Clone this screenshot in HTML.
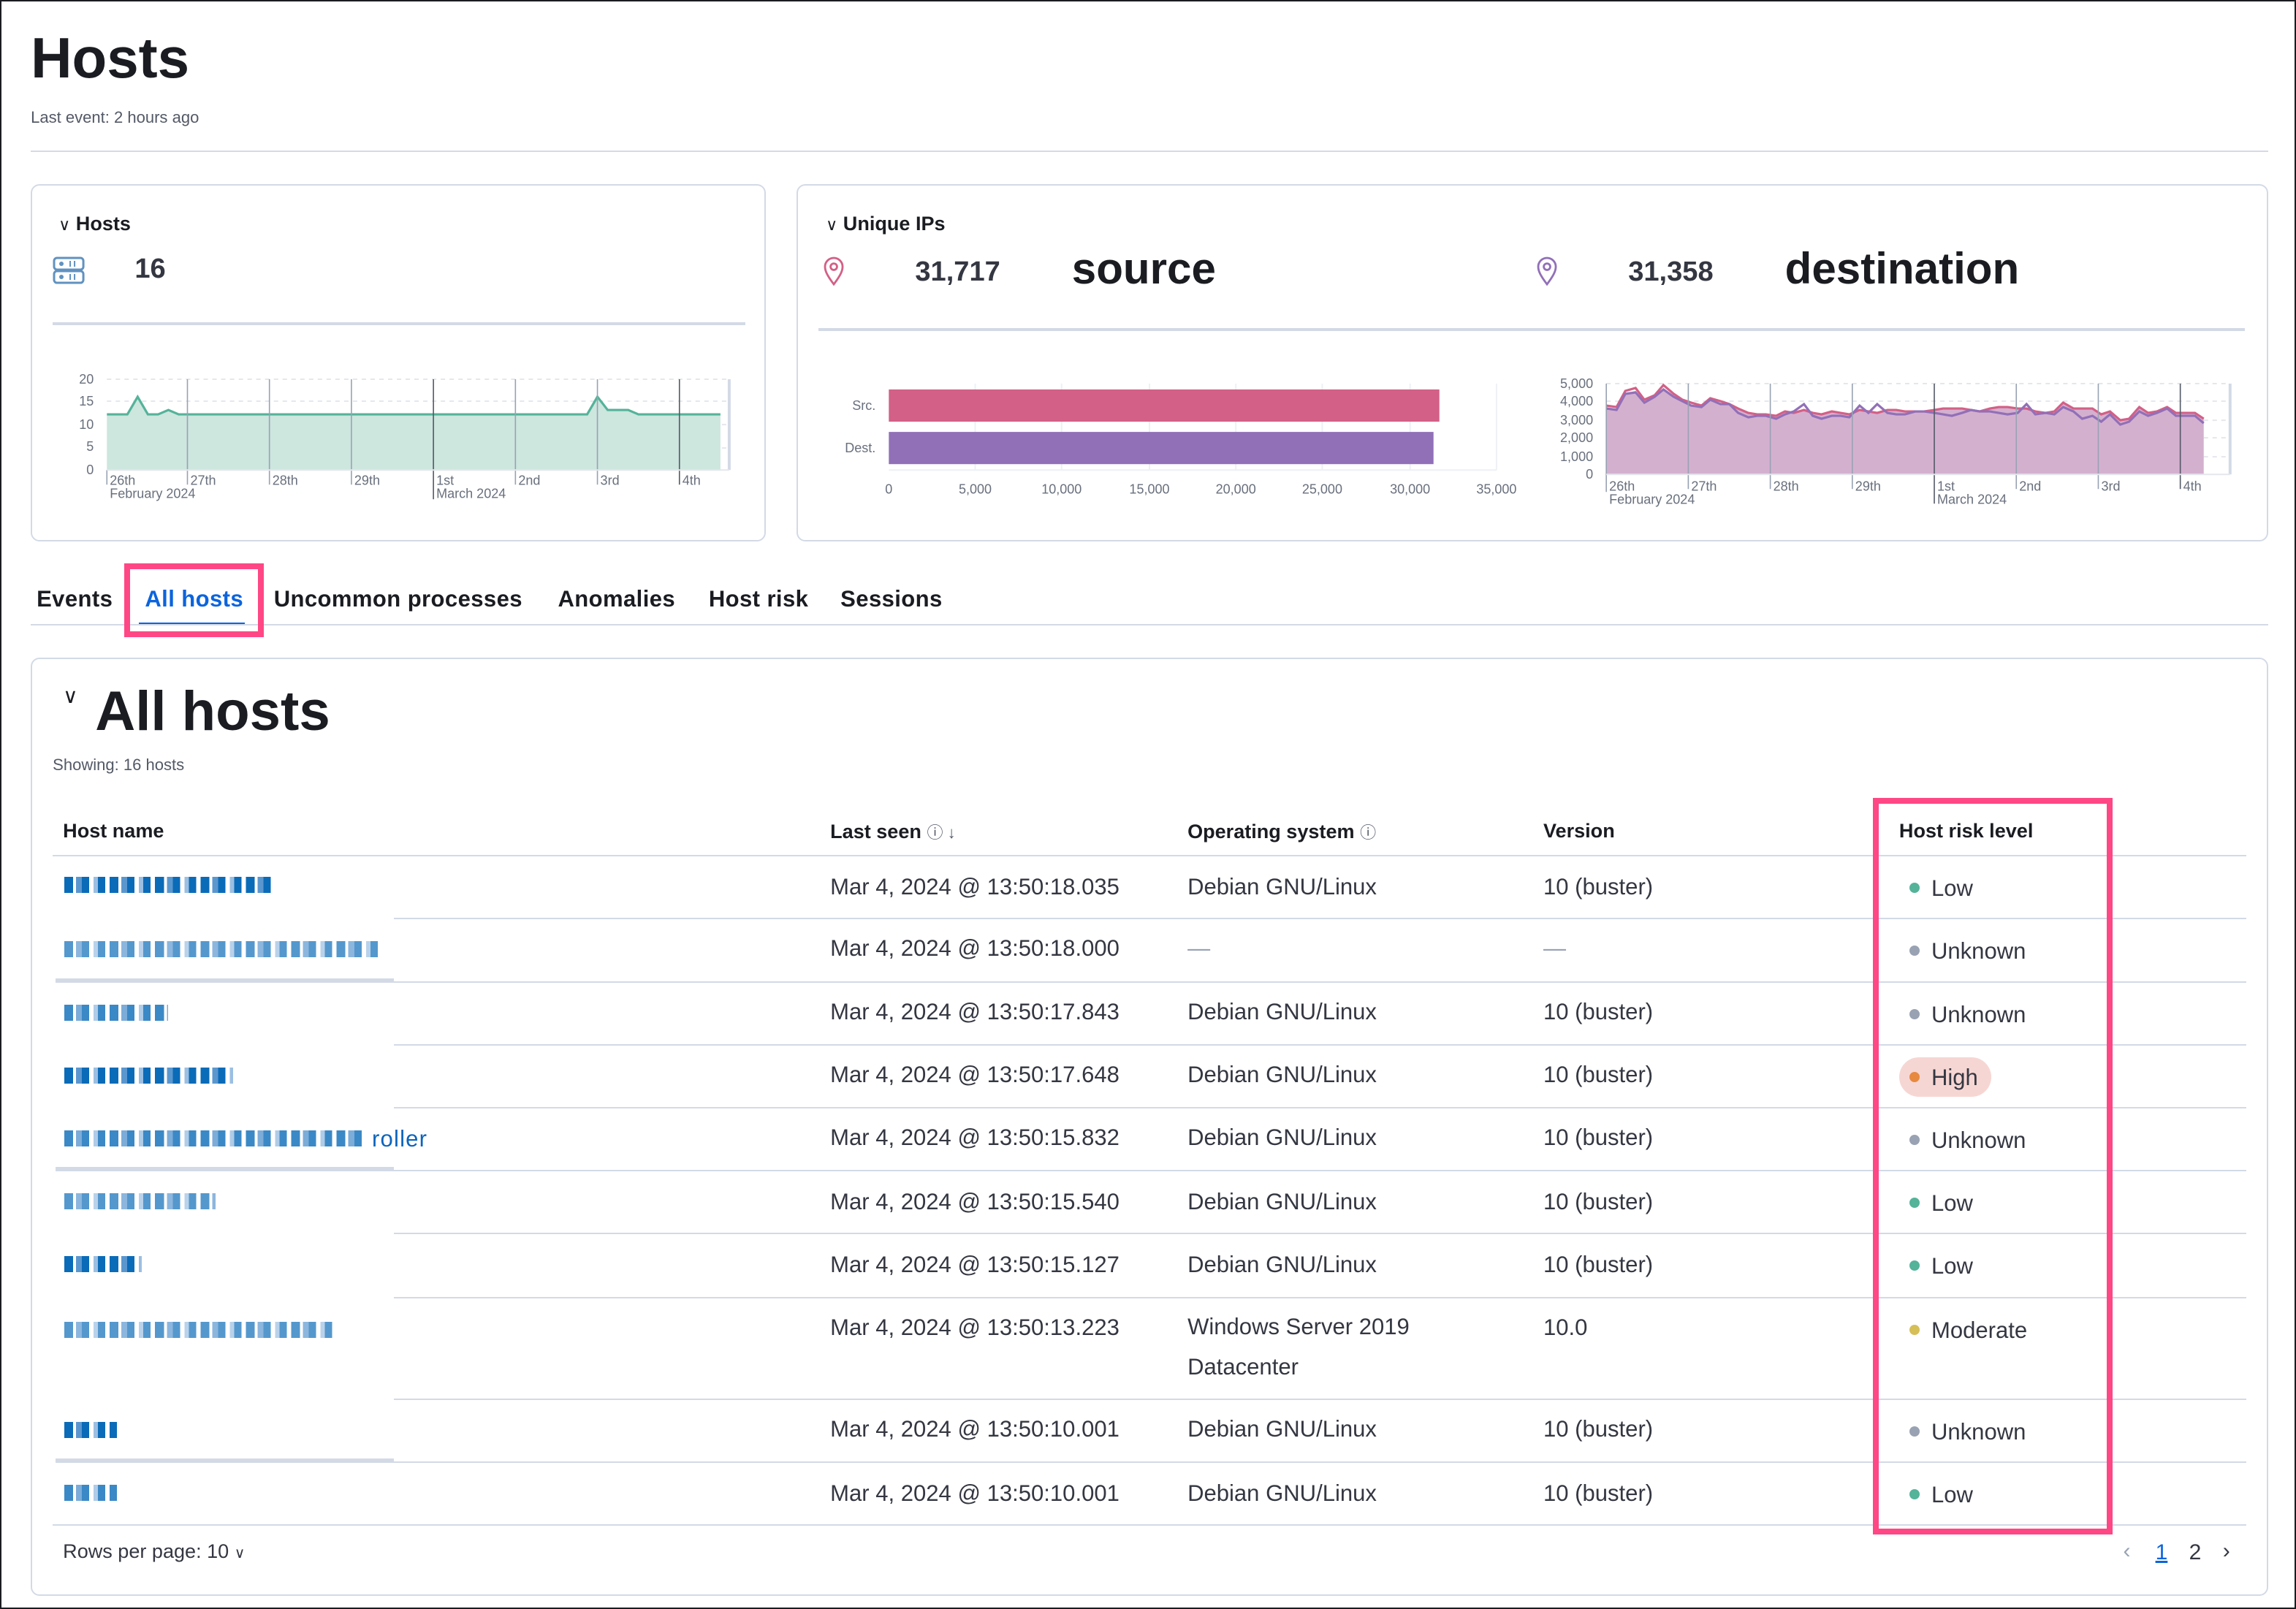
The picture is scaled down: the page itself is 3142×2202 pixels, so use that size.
<!DOCTYPE html>
<html><head><meta charset="utf-8">
<style>
html,body{margin:0;padding:0;background:#fff;}
body{width:3142px;height:2202px;overflow:hidden;}
#p{position:relative;width:1568px;height:1099px;zoom:2.0038;font-family:"Liberation Sans",sans-serif;color:#1a1c21;box-sizing:border-box;border:1px solid #1a1c21;overflow:hidden;}
.a{position:absolute;white-space:nowrap;}
.panel{position:absolute;border:1px solid #d3dae6;border-radius:6px;box-sizing:border-box;}
.hl{position:absolute;height:1px;background:#d3dae6;}
.b{font-weight:bold;}
.cell{position:absolute;font-size:15.5px;color:#343741;white-space:nowrap;}
.hd{position:absolute;font-size:13.5px;font-weight:bold;white-space:nowrap;}
.dot{display:inline-block;width:7px;height:7px;border-radius:50%;margin-right:8px;vertical-align:2px;}
.blk{position:absolute;height:11px;background:repeating-linear-gradient(90deg,#0a6bb8 0 6px,#fff 6px 8px,#5b97cf 8px 12px,#0a6bb8 12px 17px,#fff 17px 20px,#9bbfe2 20px 23px,#0a6bb8 23px 28px,#fff 28px 31px);}
.gbar{position:absolute;height:3px;background:#d3dae6;left:37px;width:231px;}
.tab{position:absolute;font-weight:bold;font-size:15.5px;letter-spacing:0.2px;white-space:nowrap;}
</style></head><body><div id="p">

<div class="a b" style="left:20px;top:16px;font-size:39px;">Hosts</div>
<div class="a" style="left:20px;top:73px;font-size:11px;color:#535966;">Last event: 2 hours ago</div>
<div class="hl" style="left:20px;top:102px;width:1528px;"></div>

<div class="panel" style="left:20px;top:125px;width:502px;height:244px;"></div>
<div class="panel" style="left:543px;top:125px;width:1005px;height:244px;"></div>

<div class="a b" style="left:39px;top:144px;font-size:13.5px;"><span style="font-weight:normal;font-size:11px;">&#8744;</span> Hosts</div>
<svg class="a" style="left:35px;top:174px" width="22" height="19" viewBox="0 0 22 19"><rect x="1" y="1" width="20" height="8" rx="2" fill="none" stroke="#6092c0" stroke-width="1.5"/><rect x="1" y="10" width="20" height="8" rx="2" fill="none" stroke="#6092c0" stroke-width="1.5"/><circle cx="6" cy="5" r="1.5" fill="#6092c0"/><circle cx="6" cy="14" r="1.5" fill="#6092c0"/><path d="M12 3v4M15 3v4M12 12v4M15 12v4" stroke="#6092c0"/></svg>
<div class="a b" style="left:91px;top:172px;font-size:19px;color:#343741;">16</div>
<div class="hl" style="left:35px;top:219px;width:473px;height:2px;"></div>

<div class="a b" style="left:563px;top:144px;font-size:13.5px;"><span style="font-weight:normal;font-size:11px;">&#8744;</span> Unique IPs</div>
<svg class="a" style="left:561px;top:174px" width="15" height="20" viewBox="0 0 15 20"><path d="M7.5 19C3 13 1.5 10 1.5 7a6 6 0 0 1 12 0c0 3-1.5 6-6 12z" fill="none" stroke="#d36086" stroke-width="1.4"/><circle cx="7.5" cy="7" r="2.2" fill="none" stroke="#d36086" stroke-width="1.4"/></svg>
<div class="a b" style="left:624px;top:174px;font-size:19px;color:#343741;">31,717</div>
<div class="a b" style="left:731px;top:165px;font-size:30px;">source</div>
<svg class="a" style="left:1048px;top:174px" width="15" height="20" viewBox="0 0 15 20"><path d="M7.5 19C3 13 1.5 10 1.5 7a6 6 0 0 1 12 0c0 3-1.5 6-6 12z" fill="none" stroke="#9170b8" stroke-width="1.4"/><circle cx="7.5" cy="7" r="2.2" fill="none" stroke="#9170b8" stroke-width="1.4"/></svg>
<div class="a b" style="left:1111px;top:174px;font-size:19px;color:#343741;">31,358</div>
<div class="a b" style="left:1218px;top:165px;font-size:30px;">destination</div>
<div class="hl" style="left:558px;top:223px;width:974px;height:2px;"></div>

<svg class="a" style="left:0;top:0" width="1568" height="1099" font-family="Liberation Sans, sans-serif" font-size="9" fill="#69707d">
 <g stroke="#e5e7ec" stroke-dasharray="3 3"><line x1="72" y1="258" x2="497" y2="258"/><line x1="72" y1="273" x2="497" y2="273"/><line x1="72" y1="289" x2="497" y2="289"/><line x1="72" y1="305" x2="497" y2="305"/></g>
 <polygon points="72,320 72,282 86,282 93,270 100,282 107,282 114,279 121,282 400,282 407,270 414,279 428,279 435,282 491,282 491,320" fill="#cde6de"/>
 <polyline points="72,282 86,282 93,270 100,282 107,282 114,279 121,282 400,282 407,270 414,279 428,279 435,282 491,282" fill="none" stroke="#54b399" stroke-width="1.6"/>
 <g stroke="#98a2b3" stroke-width="0.8"><line x1="127" y1="258" x2="127" y2="330"/><line x1="183" y1="258" x2="183" y2="330"/><line x1="239" y1="258" x2="239" y2="330"/><line x1="295" y1="258" x2="295" y2="340" stroke="#535966"/><line x1="351" y1="258" x2="351" y2="330"/><line x1="407" y1="258" x2="407" y2="330"/><line x1="463" y1="258" x2="463" y2="330" stroke="#535966"/><line x1="72" y1="320" x2="72" y2="330"/></g>
 <line x1="497" y1="258" x2="497" y2="320" stroke="#d3dae6" stroke-width="2"/>
 <line x1="72" y1="320" x2="497" y2="320" stroke="#e5e7ec"/>
 <g text-anchor="end"><text x="63" y="261">20</text><text x="63" y="276">15</text><text x="63" y="292">10</text><text x="63" y="307">5</text><text x="63" y="323">0</text></g>
 <text x="74" y="330">26th</text><text x="129" y="330">27th</text><text x="185" y="330">28th</text><text x="241" y="330">29th</text><text x="297" y="330">1st</text><text x="353" y="330">2nd</text><text x="409" y="330">3rd</text><text x="465" y="330">4th</text>
 <text x="74" y="339">February 2024</text><text x="297" y="339">March 2024</text>

 <g stroke="#eef0f4"><line x1="665" y1="261" x2="665" y2="320"/><line x1="724" y1="261" x2="724" y2="320"/><line x1="784" y1="261" x2="784" y2="320"/><line x1="843" y1="261" x2="843" y2="320"/><line x1="902" y1="261" x2="902" y2="320"/><line x1="962" y1="261" x2="962" y2="320"/><line x1="1021" y1="261" x2="1021" y2="320"/><line x1="606" y1="320" x2="1021" y2="320"/></g>
 <rect x="606" y="265" width="376" height="22" fill="#d36086"/>
 <rect x="606" y="294" width="372" height="22" fill="#9170b8"/>
 <text x="597" y="279" text-anchor="end">Src.</text><text x="597" y="308" text-anchor="end">Dest.</text>
 <g text-anchor="middle"><text x="606" y="336">0</text><text x="665" y="336">5,000</text><text x="724" y="336">10,000</text><text x="784" y="336">15,000</text><text x="843" y="336">20,000</text><text x="902" y="336">25,000</text><text x="962" y="336">30,000</text><text x="1021" y="336">35,000</text></g>

 <g stroke="#e5e7ec" stroke-dasharray="3 3"><line x1="1096" y1="261" x2="1522" y2="261"/><line x1="1096" y1="273" x2="1522" y2="273"/><line x1="1096" y1="286" x2="1522" y2="286"/><line x1="1096" y1="298" x2="1522" y2="298"/><line x1="1096" y1="311" x2="1522" y2="311"/></g>
 <polygon fill="#d4b0cf" points="1096,323 1096,277 1103,278 1109,268 1116,266 1122,273 1129,270 1135,264 1142,269 1148,273 1154,276 1161,277 1167,272 1174,274 1180,275 1186,278 1193,281 1199,282 1205,282 1212,283 1218,280 1224,281 1231,279 1237,281 1243,282 1250,280 1256,281 1262,282 1269,279 1275,280 1281,281 1288,279 1294,279 1300,280 1307,280 1313,280 1320,279 1326,278 1332,278 1339,278 1345,279 1351,280 1358,278 1364,277 1370,277 1377,278 1383,278 1389,280 1396,281 1402,280 1408,274 1415,278 1421,278 1428,278 1434,282 1440,280 1447,286 1453,285 1460,277 1466,281 1472,280 1479,277 1485,281 1491,281 1498,281 1504,285 1504,323"/>
 <polyline fill="none" stroke="#d36086" stroke-width="1.6" points="1096,276 1103,277 1109,266 1116,264 1122,272 1129,269 1135,262 1142,268 1148,272 1154,274 1161,276 1167,271 1174,273 1180,275 1186,278 1193,281 1199,282 1205,282 1212,283 1218,280 1224,281 1231,279 1237,281 1243,282 1250,280 1256,281 1262,282 1269,279 1275,280 1281,281 1288,279 1294,279 1300,280 1307,280 1313,280 1320,279 1326,278 1332,278 1339,278 1345,279 1351,280 1358,278 1364,277 1370,277 1377,278 1383,278 1389,280 1396,281 1402,280 1408,274 1415,278 1421,278 1428,278 1434,282 1440,280 1447,286 1453,285 1460,277 1466,281 1472,280 1479,277 1485,281 1491,281 1498,281 1504,285"/>
 <polyline fill="none" stroke="#9170b8" stroke-width="1.6" points="1096,278 1103,279 1109,268 1116,267 1122,274 1129,270 1135,265 1142,270 1148,273 1154,276 1161,277 1167,272 1174,275 1180,275 1186,281 1193,284 1199,283 1205,283 1212,285 1218,282 1224,280 1231,275 1237,283 1243,285 1250,283 1256,283 1262,284 1269,276 1275,281 1281,275 1288,281 1294,282 1300,282 1307,280 1313,280 1320,281 1326,282 1332,283 1339,281 1345,279 1351,280 1358,280 1364,281 1370,282 1377,281 1383,275 1389,282 1396,281 1402,282 1408,277 1415,280 1421,285 1428,283 1434,287 1440,282 1447,289 1453,287 1460,280 1466,283 1472,281 1479,278 1485,283 1491,283 1498,283 1504,288"/>
 <g stroke="#98a2b3" stroke-width="0.8"><line x1="1096" y1="261" x2="1096" y2="335"/><line x1="1152" y1="261" x2="1152" y2="333"/><line x1="1208" y1="261" x2="1208" y2="333"/><line x1="1264" y1="261" x2="1264" y2="333"/><line x1="1320" y1="261" x2="1320" y2="343" stroke="#535966"/><line x1="1376" y1="261" x2="1376" y2="333"/><line x1="1432" y1="261" x2="1432" y2="333"/><line x1="1488" y1="261" x2="1488" y2="333" stroke="#535966"/></g>
 <line x1="1522" y1="261" x2="1522" y2="323" stroke="#d3dae6" stroke-width="2"/>
 <line x1="1096" y1="323" x2="1522" y2="323" stroke="#e5e7ec"/>
 <g text-anchor="end"><text x="1087" y="264">5,000</text><text x="1087" y="276">4,000</text><text x="1087" y="289">3,000</text><text x="1087" y="301">2,000</text><text x="1087" y="314">1,000</text><text x="1087" y="326">0</text></g>
 <text x="1098" y="334">26th</text><text x="1154" y="334">27th</text><text x="1210" y="334">28th</text><text x="1266" y="334">29th</text><text x="1322" y="334">1st</text><text x="1378" y="334">2nd</text><text x="1434" y="334">3rd</text><text x="1490" y="334">4th</text>
 <text x="1098" y="343">February 2024</text><text x="1322" y="343">March 2024</text>
</svg>

<div class="tab" style="left:24px;top:399px;">Events</div>
<div class="tab" style="left:98px;top:399px;color:#0b64dd;">All hosts</div>
<div class="a" style="left:94px;top:424px;width:72px;height:2px;background:#0b64dd;"></div>
<div class="tab" style="left:186px;top:399px;">Uncommon processes</div>
<div class="tab" style="left:380px;top:399px;">Anomalies</div>
<div class="tab" style="left:483px;top:399px;">Host risk</div>
<div class="tab" style="left:573px;top:399px;">Sessions</div>
<div class="hl" style="left:20px;top:425px;width:1528px;"></div>
<div class="a" style="left:84px;top:384px;width:95px;height:50px;box-sizing:border-box;border:4px solid #ff4785;"></div>

<div class="panel" style="left:20px;top:448px;width:1528px;height:641px;"></div>
<div class="a" style="left:42px;top:466px;font-size:14px;">&#8744;</div>
<div class="a b" style="left:64px;top:463px;font-size:38px;">All hosts</div>
<div class="a" style="left:35px;top:515px;font-size:11px;color:#535966;">Showing: 16 hosts</div>

<div class="hd" style="left:42px;top:559px;">Host name</div>
<div class="hd" style="left:566px;top:559px;">Last seen <span style="font-weight:normal;font-size:11px;color:#535966;">&#9432; &#8595;</span></div>
<div class="hd" style="left:810px;top:559px;">Operating system <span style="font-weight:normal;font-size:11px;color:#535966;">&#9432;</span></div>
<div class="hd" style="left:1053px;top:559px;">Version</div>
<div class="hd" style="left:1296px;top:559px;">Host risk level</div>

<div class="hl" style="left:35px;top:583px;width:1498px;"></div>
<div class="hl" style="left:268px;top:626px;width:1265px;"></div>
<div class="hl" style="left:268px;top:669px;width:1265px;"></div>
<div class="hl" style="left:268px;top:712px;width:1265px;"></div>
<div class="hl" style="left:268px;top:755px;width:1265px;"></div>
<div class="hl" style="left:268px;top:798px;width:1265px;"></div>
<div class="hl" style="left:268px;top:841px;width:1265px;"></div>
<div class="hl" style="left:268px;top:885px;width:1265px;"></div>
<div class="hl" style="left:268px;top:954px;width:1265px;"></div>
<div class="hl" style="left:268px;top:997px;width:1265px;"></div>
<div class="hl" style="left:35px;top:1040px;width:1498px;"></div>
<div class="gbar" style="top:667px;"></div>
<div class="gbar" style="top:796px;"></div>
<div class="gbar" style="top:995px;"></div>

<div class="blk" style="left:43px;top:598px;width:141px;"></div>
<div class="blk" style="left:43px;top:642px;width:214px;opacity:.7"></div>
<div class="blk" style="left:43px;top:685px;width:71px;opacity:.8"></div>
<div class="blk" style="left:43px;top:728px;width:115px;"></div>
<div class="blk" style="left:43px;top:771px;width:206px;opacity:.8"></div><div class="a" style="left:253px;top:768px;font-size:15.5px;color:#0b64bd;letter-spacing:0.6px;">roller</div>
<div class="blk" style="left:43px;top:814px;width:103px;opacity:.7"></div>
<div class="blk" style="left:43px;top:857px;width:53px;"></div>
<div class="blk" style="left:43px;top:902px;width:183px;opacity:.7"></div>
<div class="blk" style="left:43px;top:970px;width:36px;"></div>
<div class="blk" style="left:43px;top:1013px;width:36px;opacity:.8"></div>

<div class="cell" style="left:566px;top:596px;">Mar 4, 2024 @ 13:50:18.035</div>
<div class="cell" style="left:566px;top:638px;">Mar 4, 2024 @ 13:50:18.000</div>
<div class="cell" style="left:566px;top:681px;">Mar 4, 2024 @ 13:50:17.843</div>
<div class="cell" style="left:566px;top:724px;">Mar 4, 2024 @ 13:50:17.648</div>
<div class="cell" style="left:566px;top:767px;">Mar 4, 2024 @ 13:50:15.832</div>
<div class="cell" style="left:566px;top:811px;">Mar 4, 2024 @ 13:50:15.540</div>
<div class="cell" style="left:566px;top:854px;">Mar 4, 2024 @ 13:50:15.127</div>
<div class="cell" style="left:566px;top:897px;">Mar 4, 2024 @ 13:50:13.223</div>
<div class="cell" style="left:566px;top:966px;">Mar 4, 2024 @ 13:50:10.001</div>
<div class="cell" style="left:566px;top:1010px;">Mar 4, 2024 @ 13:50:10.001</div>

<div class="cell" style="left:810px;top:596px;">Debian GNU/Linux</div>
<div class="cell" style="left:810px;top:638px;color:#98a2b3;">—</div>
<div class="cell" style="left:810px;top:681px;">Debian GNU/Linux</div>
<div class="cell" style="left:810px;top:724px;">Debian GNU/Linux</div>
<div class="cell" style="left:810px;top:767px;">Debian GNU/Linux</div>
<div class="cell" style="left:810px;top:811px;">Debian GNU/Linux</div>
<div class="cell" style="left:810px;top:854px;">Debian GNU/Linux</div>
<div class="cell" style="left:810px;top:897px;line-height:27px;margin-top:-5px;">Windows Server 2019<br>Datacenter</div>
<div class="cell" style="left:810px;top:966px;">Debian GNU/Linux</div>
<div class="cell" style="left:810px;top:1010px;">Debian GNU/Linux</div>

<div class="cell" style="left:1053px;top:596px;">10 (buster)</div>
<div class="cell" style="left:1053px;top:638px;color:#98a2b3;">—</div>
<div class="cell" style="left:1053px;top:681px;">10 (buster)</div>
<div class="cell" style="left:1053px;top:724px;">10 (buster)</div>
<div class="cell" style="left:1053px;top:767px;">10 (buster)</div>
<div class="cell" style="left:1053px;top:811px;">10 (buster)</div>
<div class="cell" style="left:1053px;top:854px;">10 (buster)</div>
<div class="cell" style="left:1053px;top:897px;">10.0</div>
<div class="cell" style="left:1053px;top:966px;">10 (buster)</div>
<div class="cell" style="left:1053px;top:1010px;">10 (buster)</div>

<div class="cell" style="left:1303px;top:597px;"><span class="dot" style="background:#54b399"></span>Low</div>
<div class="cell" style="left:1303px;top:640px;"><span class="dot" style="background:#98a2b3"></span>Unknown</div>
<div class="cell" style="left:1303px;top:683px;"><span class="dot" style="background:#98a2b3"></span>Unknown</div>
<div class="a" style="left:1296px;top:721px;width:63px;height:27px;border-radius:14px;background:#f6d6d3;"></div>
<div class="cell" style="left:1303px;top:726px;"><span class="dot" style="background:#e7893f"></span>High</div>
<div class="cell" style="left:1303px;top:769px;"><span class="dot" style="background:#98a2b3"></span>Unknown</div>
<div class="cell" style="left:1303px;top:812px;"><span class="dot" style="background:#54b399"></span>Low</div>
<div class="cell" style="left:1303px;top:855px;"><span class="dot" style="background:#54b399"></span>Low</div>
<div class="cell" style="left:1303px;top:899px;"><span class="dot" style="background:#d6bf57"></span>Moderate</div>
<div class="cell" style="left:1303px;top:968px;"><span class="dot" style="background:#98a2b3"></span>Unknown</div>
<div class="cell" style="left:1303px;top:1011px;"><span class="dot" style="background:#54b399"></span>Low</div>

<div class="a" style="left:1278px;top:544px;width:164px;height:503px;box-sizing:border-box;border:4px solid #ff4785;"></div>

<div class="a" style="left:42px;top:1051px;font-size:13.5px;color:#343741;">Rows per page: 10 <span style="font-size:10px;">&#8744;</span></div>
<div class="a" style="left:1449px;top:1050px;font-size:15px;color:#98a2b3;">&#8249;</div>
<div class="a" style="left:1471px;top:1051px;font-size:15px;color:#0b64dd;text-decoration:underline;">1</div>
<div class="a" style="left:1494px;top:1051px;font-size:15px;color:#343741;">2</div>
<div class="a" style="left:1517px;top:1050px;font-size:15px;color:#343741;">&#8250;</div>

</div></body></html>
